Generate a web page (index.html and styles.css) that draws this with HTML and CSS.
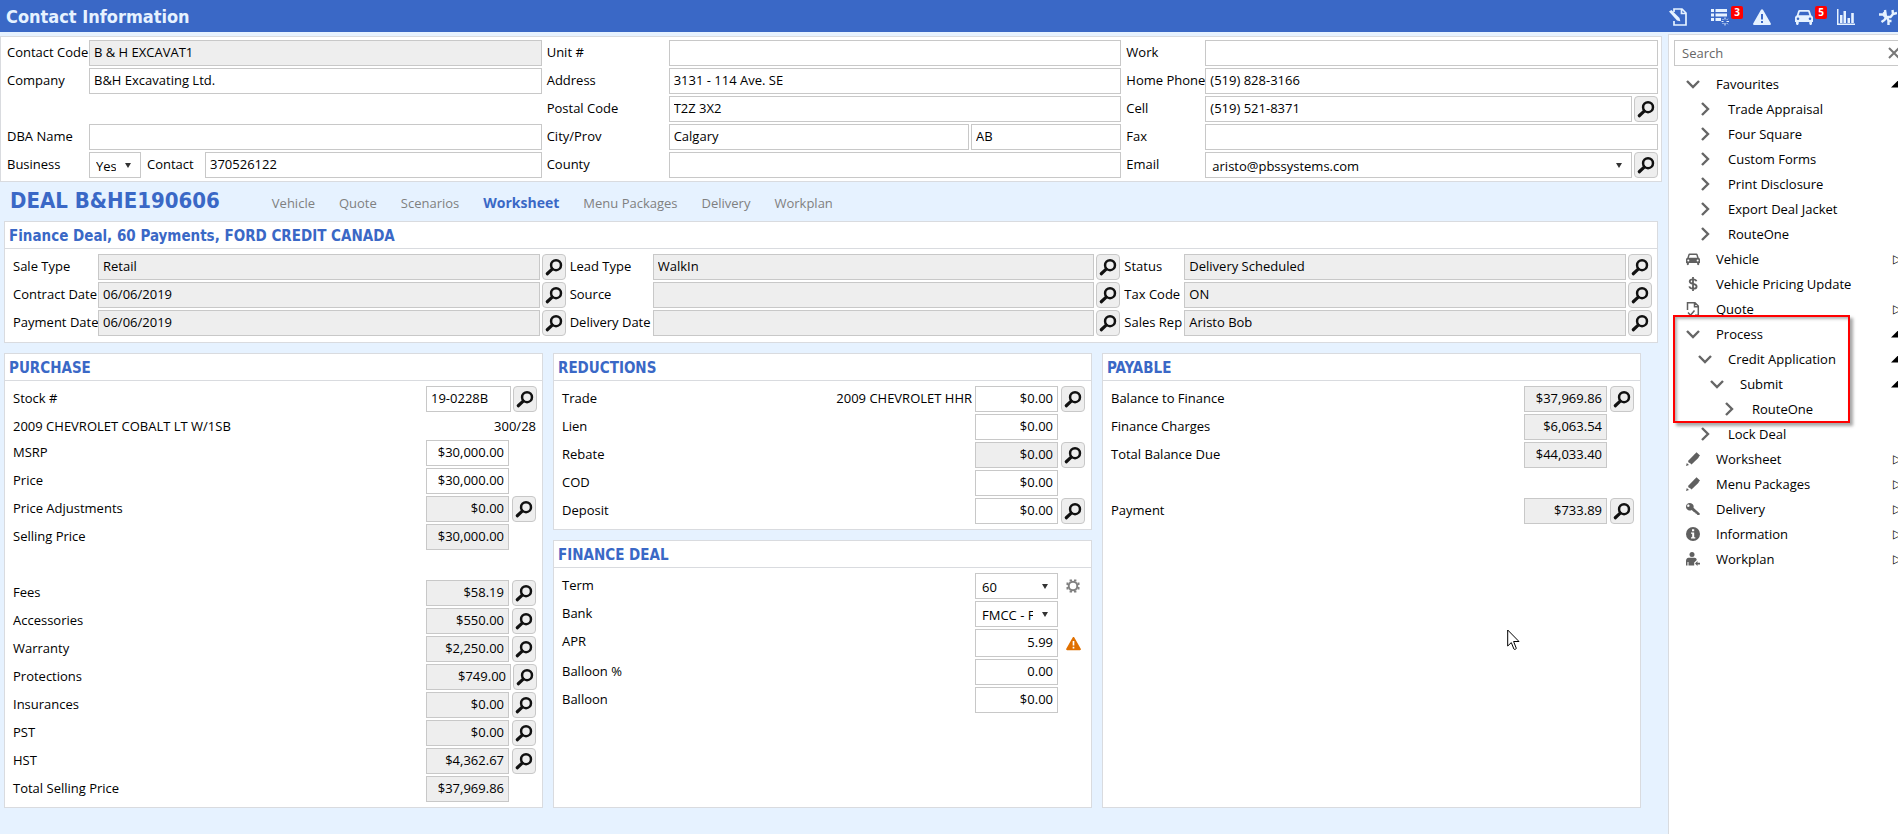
FILE: index.html
```html
<!DOCTYPE html>
<html lang="en">

<head>
    <meta charset="UTF-8">
    <meta name="viewport" content="width=device-width, initial-scale=1.0">
    <title>Contact Information</title>
    <link rel="stylesheet" href="styles.css">
</head>

<body>

    <!-- shared icons -->
    <svg class="sprite" aria-hidden="true">
        <symbol id="find" viewBox="0 0 16 16">
            <circle cx="9.8" cy="6.4" r="4.4" fill="none" stroke="#111" stroke-width="2.200" />
            <path d="M6.4 9.8L2 14" stroke="#111" stroke-width="2.8" stroke-linecap="round" />
        </symbol>
        <symbol id="car" viewBox="0 0 18 16">
            <path fill-rule="evenodd" d="M4.5 1h9c.7 0 1.200.4 1.400 1l1.400 4.500c1 .4 1.700 1.200 1.700 2.300V13h-1v1.500c0 .8-.5 1.500-1.300 1.500S14.300 15.300 14.300 14.500V13H3.700v1.500C3.700 15.300 3 16 2.300 16S1 15.300 1 14.500V13H0V8.800c0-1.100.7-1.900 1.700-2.300L3.100 2c.2-.6.7-1 1.400-1zM4.800 2.700L3.600 6.300h10.800l-1.200-3.600zM3 8.500a1.300 1.300 0 1 0 0 2.600 1.300 1.300 0 0 0 0-2.600zm12 0a1.300 1.300 0 1 0 0 2.600 1.300 1.300 0 0 0 0-2.600z" />
        </symbol>
        <symbol id="warn" viewBox="0 0 18 16">
            <path fill-rule="evenodd" d="M8 .8c.4-.8 1.600-.8 2 0l7.700 13.500c.5.8-.1 1.700-1 1.700H1.300c-.9 0-1.500-.9-1-1.700zM8 5v5.500h2V5zm0 7v2h2v-2z" />
        </symbol>
        <symbol id="right" viewBox="0 0 14 14">
            <path d="M4 1l6 6-6 6" fill="none" stroke="#666" stroke-width="2.400" />
        </symbol>
        <symbol id="down" viewBox="0 0 14 14">
            <path d="M1 4l6 6 6-6" fill="none" stroke="#666" stroke-width="2.400" />
        </symbol>
        <symbol id="pencil" viewBox="0 0 14 14">
            <path d="M2 10L9.200 2.300l1.500 1.500L4 11.200zM8.200 2.800L10.500.3 14 3.500l-2 2.200zM2 9l6.800-7 4 3.500L5.500 12.500zM0 14l.8-3L3 13z" />
        </symbol>
    </svg>

    <header class="topbar">
        <h1>Contact Information</h1>
        <nav class="tools">
            <button aria-label="Edit note">
                <svg width="18" height="18" viewBox="0 0 18 18"><path d="M5 4V1h8l4 4v12H5v-4M12.500 1v4.500H17" fill="none" stroke="#e6f2ff" stroke-width="1.700" /><path d="M0 3.500L2.500 2l8 8 .8 3.200-3.300-.8z" fill="#e6f2ff" /></svg>
            </button>
            <button aria-label="Tasks">
                <svg width="18" height="18" viewBox="0 0 18 18"><path d="M0 1h3v3H0zM4.500 1H16v3H4.500zM0 5.500h3v3H0zM4.500 5.500H16v3H4.500zM0 10h3v3H0zM4.500 10H10v3H4.500z" fill="#e6f2ff" /><path d="M14 9.500v2M14 15v2.500M10.500 13.500h2M15.500 13.500H18M11.500 11l1 1M16.800 10.800l-1 1M11.500 16l1-1M16.800 16.200l-1-1" stroke="#e6f2ff" /></svg>
                <span class="badge">3</span>
            </button>
            <button aria-label="Alerts"><svg width="18" height="16"><use href="#warn" /></svg></button>
            <button aria-label="Vehicles"><svg width="18" height="16"><use href="#car" /></svg><span class="badge">5</span></button>
            <button aria-label="Reports">
                <svg width="18" height="16" viewBox="0 0 18 16"><path d="M0 0h1.500v14.500H18V16H0zM3 6h2.500v8H3zM6.500 2H9v12H6.500zM10.500 9H13v5h-2.500zM14.200 4h2.600v10h-2.600z" /></svg>
            </button>
            <button aria-label="Workflow">
                <svg width="18" height="18" viewBox="0 0 18 18"><path d="M0 6.500h4l2.500 2.500h5L14 6l4-1M7 9L6 2M4.500 4L6 5.500M7.500 9l-2 3-3 2M8 9.500l1.500 3V17M9.500 13h3M14 6l-.5-4" fill="none" stroke="#e6f2ff" stroke-width="2.400" /></svg>
            </button>
        </nav>
    </header>

    <div class="page">
        <main class="main">

            <section class="panel contact">
                <div class="col">
                    <div class="field"><label for="code">Contact Code</label><input id="code" value="B &amp; H EXCAVAT1" readonly></div>
                    <div class="field"><label for="company">Company</label><input id="company" value="B&amp;H Excavating Ltd."></div>
                    <div class="field"></div>
                    <div class="field"><label for="dba">DBA Name</label><input id="dba"></div>
                    <div class="field">
                        <label for="business">Business</label>
                        <div class="select yes"><select id="business"><option>Yes</option><option>No</option></select></div>
                        <label class="inner" for="person">Contact</label><input id="person" value="370526122">
                    </div>
                </div>
                <div class="col">
                    <div class="field"><label for="unit">Unit #</label><input id="unit"></div>
                    <div class="field"><label for="address">Address</label><input id="address" value="3131 - 114 Ave. SE"></div>
                    <div class="field"><label for="postal">Postal Code</label><input id="postal" value="T2Z 3X2"></div>
                    <div class="field"><label for="city">City/Prov</label><div class="pair"><input id="city" value="Calgary"><input aria-label="Province" value="AB"></div></div>
                    <div class="field"><label for="county">County</label><input id="county"></div>
                </div>
                <div class="col">
                    <div class="field"><label for="work">Work</label><input id="work"></div>
                    <div class="field"><label for="home">Home Phone</label><input id="home" value="(519) 828-3166"></div>
                    <div class="field"><label for="cell">Cell</label><input id="cell" value="(519) 521-8371"><button class="find" aria-label="Find"><svg><use href="#find" /></svg></button></div>
                    <div class="field"><label for="fax">Fax</label><input id="fax"></div>
                    <div class="field"><label for="email">Email</label>
                        <div class="select"><select id="email"><option>aristo@pbssystems.com</option></select></div>
                        <button class="find" aria-label="Find"><svg><use href="#find" /></svg></button>
                    </div>
                </div>
            </section>

            <div class="dealbar">
                <h2>DEAL B&amp;HE190606</h2>
                <nav class="tabs">
                    <a href="#">Vehicle</a>
                    <a href="#">Quote</a>
                    <a href="#">Scenarios</a>
                    <a href="#" class="active">Worksheet</a>
                    <a href="#">Menu Packages</a>
                    <a href="#">Delivery</a>
                    <a href="#">Workplan</a>
                </nav>
            </div>

            <section class="panel deal">
                <h3>Finance Deal, 60 Payments, FORD CREDIT CANADA</h3>
                <div class="deal-body">
                    <div class="col">
                        <div class="field"><label for="saletype">Sale Type</label><input id="saletype" value="Retail" readonly><button class="find" aria-label="Find"><svg><use href="#find" /></svg></button></div>
                        <div class="field"><label for="contract">Contract Date</label><input id="contract" value="06/06/2019" readonly><button class="find" aria-label="Find"><svg><use href="#find" /></svg></button></div>
                        <div class="field"><label for="paydate">Payment Date</label><input id="paydate" value="06/06/2019" readonly><button class="find" aria-label="Find"><svg><use href="#find" /></svg></button></div>
                    </div>
                    <div class="col">
                        <div class="field"><label for="lead">Lead Type</label><input id="lead" value="WalkIn" readonly><button class="find" aria-label="Find"><svg><use href="#find" /></svg></button></div>
                        <div class="field"><label for="source">Source</label><input id="source" readonly><button class="find" aria-label="Find"><svg><use href="#find" /></svg></button></div>
                        <div class="field"><label for="deldate">Delivery Date</label><input id="deldate" readonly><button class="find" aria-label="Find"><svg><use href="#find" /></svg></button></div>
                    </div>
                    <div class="col">
                        <div class="field"><label for="status">Status</label><input id="status" value="Delivery Scheduled" readonly><button class="find" aria-label="Find"><svg><use href="#find" /></svg></button></div>
                        <div class="field"><label for="tax">Tax Code</label><input id="tax" value="ON" readonly><button class="find" aria-label="Find"><svg><use href="#find" /></svg></button></div>
                        <div class="field"><label for="rep">Sales Rep</label><input id="rep" value="Aristo Bob" readonly><button class="find" aria-label="Find"><svg><use href="#find" /></svg></button></div>
                    </div>
                </div>
            </section>

            <div class="sheets">
                <section class="panel">
                    <h3>PURCHASE</h3>
                    <div class="rows">
                        <div class="row wide"><label for="stock">Stock #</label><input id="stock" class="left" value="19-0228B"><button class="find" aria-label="Find"><svg><use href="#find" /></svg></button></div>
                        <div class="row info"><span class="grow">2009 CHEVROLET COBALT LT W/1SB</span><span>300/28</span></div>
                        <div class="row"><label for="msrp">MSRP</label><input id="msrp" value="$30,000.00"><span class="side"></span></div>
                        <div class="row"><label for="price">Price</label><input id="price" value="$30,000.00"><span class="side"></span></div>
                        <div class="row"><label for="adjust">Price Adjustments</label><input id="adjust" value="$0.00" readonly><button class="find" aria-label="Find"><svg><use href="#find" /></svg></button></div>
                        <div class="row"><label for="selling">Selling Price</label><input id="selling" value="$30,000.00" readonly><span class="side"></span></div>
                        <div class="row"></div>
                        <div class="row"><label for="fees">Fees</label><input id="fees" value="$58.19" readonly><button class="find" aria-label="Find"><svg><use href="#find" /></svg></button></div>
                        <div class="row"><label for="acc">Accessories</label><input id="acc" value="$550.00" readonly><button class="find" aria-label="Find"><svg><use href="#find" /></svg></button></div>
                        <div class="row"><label for="warranty">Warranty</label><input id="warranty" value="$2,250.00" readonly><button class="find" aria-label="Find"><svg><use href="#find" /></svg></button></div>
                        <div class="row wide"><label for="prot">Protections</label><input id="prot" value="$749.00" readonly><button class="find" aria-label="Find"><svg><use href="#find" /></svg></button></div>
                        <div class="row"><label for="ins">Insurances</label><input id="ins" value="$0.00" readonly><button class="find" aria-label="Find"><svg><use href="#find" /></svg></button></div>
                        <div class="row"><label for="pst">PST</label><input id="pst" value="$0.00" readonly><button class="find" aria-label="Find"><svg><use href="#find" /></svg></button></div>
                        <div class="row"><label for="hst">HST</label><input id="hst" value="$4,362.67" readonly><button class="find" aria-label="Find"><svg><use href="#find" /></svg></button></div>
                        <div class="row"><label for="total">Total Selling Price</label><input id="total" value="$37,969.86" readonly><span class="side"></span></div>
                    </div>
                </section>

                <div class="stack">
                    <section class="panel">
                        <h3>REDUCTIONS</h3>
                        <div class="rows">
                            <div class="row"><label for="trade">Trade</label><span>2009 CHEVROLET HHR</span><input id="trade" value="$0.00"><button class="find" aria-label="Find"><svg><use href="#find" /></svg></button></div>
                            <div class="row"><label for="lien">Lien</label><input id="lien" value="$0.00"><span class="side"></span></div>
                            <div class="row"><label for="rebate">Rebate</label><input id="rebate" value="$0.00" readonly><button class="find" aria-label="Find"><svg><use href="#find" /></svg></button></div>
                            <div class="row"><label for="cod">COD</label><input id="cod" value="$0.00"><span class="side"></span></div>
                            <div class="row"><label for="deposit">Deposit</label><input id="deposit" value="$0.00"><button class="find" aria-label="Find"><svg><use href="#find" /></svg></button></div>
                        </div>
                    </section>
                    <section class="panel fill">
                        <h3>FINANCE DEAL</h3>
                        <div class="rows">
                            <div class="row"><label for="term">Term</label>
                                <div class="select"><select id="term"><option>60</option></select></div>
                                <span class="side"><svg width="14" height="14" viewBox="0 0 14 14"><circle cx="7" cy="7" r="4.300" fill="none" stroke="#808080" stroke-width="2" /><path d="M4.800.5v2M9.200.5v2M4.800 11.500v2M9.200 11.500v2M.5 4.800h2M.5 9.200h2M11.500 4.800h2M11.500 9.200h2" stroke="#808080" stroke-width="2.400" /></svg></span>
                            </div>
                            <div class="row"><label for="bank">Bank</label>
                                <div class="select"><select id="bank"><option>FMCC - FORD CREDIT CANADA</option></select></div>
                                <span class="side"></span>
                            </div>
                            <div class="row tall"><label for="apr">APR</label><input id="apr" value="5.99"><span class="side alert"><svg width="15" height="15"><use href="#warn" /></svg></span></div>
                            <div class="row"><label for="balloonpct">Balloon %</label><input id="balloonpct" value="0.00"><span class="side"></span></div>
                            <div class="row"><label for="balloon">Balloon</label><input id="balloon" value="$0.00"><span class="side"></span></div>
                        </div>
                    </section>
                </div>

                <section class="panel">
                    <h3>PAYABLE</h3>
                    <div class="rows">
                        <div class="row"><label for="balance">Balance to Finance</label><input id="balance" value="$37,969.86" readonly><button class="find" aria-label="Find"><svg><use href="#find" /></svg></button></div>
                        <div class="row"><label for="charges">Finance Charges</label><input id="charges" value="$6,063.54" readonly><span class="side"></span></div>
                        <div class="row"><label for="due">Total Balance Due</label><input id="due" value="$44,033.40" readonly><span class="side"></span></div>
                        <div class="row"></div>
                        <div class="row"><label for="payment">Payment</label><input id="payment" value="$733.89" readonly><button class="find" aria-label="Find"><svg><use href="#find" /></svg></button></div>
                    </div>
                </section>
            </div>
        </main>

        <aside class="sidebar">
            <div class="sidebar-inner">
                <div class="search">
                    <input type="text" placeholder="Search" aria-label="Search">
                    <button aria-label="Clear"><svg width="12" height="12" viewBox="0 0 12 12"><path d="M1 1l10 10M11 1L1 11" stroke="#777" stroke-width="2" /></svg></button>
                </div>
                <ul class="tree">
                    <li class="open"><svg><use href="#down" /></svg><a href="#">Favourites</a></li>
                    <li class="l2"><svg><use href="#right" /></svg><a href="#">Trade Appraisal</a></li>
                    <li class="l2"><svg><use href="#right" /></svg><a href="#">Four Square</a></li>
                    <li class="l2"><svg><use href="#right" /></svg><a href="#">Custom Forms</a></li>
                    <li class="l2"><svg><use href="#right" /></svg><a href="#">Print Disclosure</a></li>
                    <li class="l2"><svg><use href="#right" /></svg><a href="#">Export Deal Jacket</a></li>
                    <li class="l2"><svg><use href="#right" /></svg><a href="#">RouteOne</a></li>
                    <li class="closed"><svg><use href="#car" /></svg><a href="#">Vehicle</a></li>
                    <li><svg viewBox="0 0 14 14"><path d="M10.500 4.300C10 2.800 8.800 2.400 7 2.400c-2 0-3.300.8-3.300 2.200C3.700 7.800 10.600 6 10.600 9.400c0 1.500-1.500 2.300-3.500 2.300-2 0-3.400-.7-3.800-2.300M7 0v14" fill="none" stroke="#606060" stroke-width="1.800" /></svg><a href="#">Vehicle Pricing Update</a></li>
                    <li class="closed"><svg viewBox="0 0 14 14"><path d="M1.500 8V.8H9L12.300 4v9.200H9M8.500.8v4h3.800M2 10.500l2.500 2.700L8.500 8.500" fill="none" stroke="#606060" stroke-width="1.500" /></svg><a href="#">Quote</a></li>
                    <li class="open"><svg><use href="#down" /></svg><a href="#">Process</a><span class="highlight"></span></li>
                    <li class="open l2"><svg><use href="#down" /></svg><a href="#">Credit Application</a></li>
                    <li class="open l3"><svg><use href="#down" /></svg><a href="#">Submit</a></li>
                    <li class="l4"><svg><use href="#right" /></svg><a href="#">RouteOne</a></li>
                    <li class="l2"><svg><use href="#right" /></svg><a href="#">Lock Deal</a></li>
                    <li class="closed"><svg><use href="#pencil" /></svg><a href="#">Worksheet</a></li>
                    <li class="closed"><svg><use href="#pencil" /></svg><a href="#">Menu Packages</a></li>
                    <li class="closed"><svg viewBox="0 0 14 14"><path fill-rule="evenodd" d="M4 1a3.700 3.700 0 0 1 3.500 4.800l6.300 5.700-.3 1.500h-2l-1-1.200-1-.2-.3-1.200-1.100-.1-2.400-2.200A3.800 3.800 0 1 1 4 1zM2.700 2.500a1.200 1.200 0 1 0 0 2.300 1.200 1.200 0 0 0 0-2.300z" /></svg><a href="#">Delivery</a></li>
                    <li class="closed"><svg viewBox="0 0 14 14"><circle cx="7" cy="7" r="7" /><path d="M6 2.300h2.200v2H6zM5 5.500h3.200v4.800H9.300v1.300H5v-1.300h1.200V6.800H5z" fill="#fff" /></svg><a href="#">Information</a></li>
                    <li class="closed"><svg viewBox="0 0 14 14"><circle cx="6" cy="2.500" r="2.500" /><path d="M0 13.500V9c0-2 1-3.300 2.500-3.300h6C9.800 5.700 10.500 6.500 10.800 8L8.200 10.500v3H2.500V10H1.500v3.500z" /><path d="M9 11.500L11.500 9v1.700H14v1.700h-2.500V14z" /></svg><a href="#">Workplan</a></li>
                </ul>
            </div>
        </aside>
    </div>

    <svg class="pointer" width="13" height="22" viewBox="0 0 13 22" aria-hidden="true"><path d="M.7 1v16l3.600-3.400 2.600 6.400c.4 1 2.700.2 2.300-1L6.600 12.500H12z" fill="#fff" stroke="#000" /></svg>

</body>

</html>
```
FILE: styles.css
```css
* {
    box-sizing: border-box;
}

body {
    margin: 0;
    min-height: 100vh;
    display: flex;
    flex-direction: column;
    overflow: hidden;
    background: #e6f2ff;
    color: #000;
    font-family: "Open Sans", "Segoe UI", sans-serif;
    font-size: 13px;
    line-height: 18px;
}

h1,
h2,
h3 {
    margin: 0;
    font-family: "DejaVu Sans Condensed", Tahoma, sans-serif;
    font-weight: bold;
    color: #3a68c6;
}

a {
    color: inherit;
    text-decoration: none;
}

button,
input,
select {
    font: inherit;
    color: inherit;
}

button {
    display: flex;
    align-items: center;
    justify-content: center;
    padding: 0;
    cursor: pointer;
}

.sprite {
    display: none;
}

/* top bar */
.topbar {
    display: flex;
    justify-content: space-between;
    height: 32px;
    padding-left: 6px;
    overflow: hidden;
    background: #3a68c6;
}

.topbar h1 {
    font-size: 18px;
    line-height: 33px;
    color: #e6f2ff;
}

.tools {
    display: flex;
    margin-right: -11px;
    padding-top: 2px;
}

.tools button {
    position: relative;
    width: 42px;
    border: none;
    background: none;
    fill: #e6f2ff;
}

.badge {
    position: absolute;
    left: 32px;
    top: 4px;
    width: 12px;
    border-radius: 2px;
    background: #f00;
    color: #fff;
    font-size: 10px;
    font-weight: bold;
    line-height: 13px;
}

/* layout */
.page {
    flex: 1;
    display: flex;
}

.main {
    flex: 1;
    min-width: 0;
    padding-top: 4px;
}

.panel {
    border: 1px solid #d9dbdf;
    background: #fff;
}

.panel h3 {
    height: 27px;
    padding-left: 4px;
    border-bottom: 1px solid #d9dbdf;
    font-size: 15px;
    line-height: 28px;
}

/* fields */
.col {
    display: flex;
    flex-direction: column;
    gap: 2px;
}

.field {
    display: flex;
    gap: 2px;
    height: 26px;
}

label {
    line-height: 24px;
    white-space: nowrap;
}

.field > label {
    flex: none;
    margin-right: -2px;
}

input,
select {
    flex: 1;
    min-width: 0;
    width: 100%;
    height: 100%;
    padding: 0 4px 2px;
    border: 1px solid #c8c8c8;
    border-radius: 0;
    background: #fff;
    outline: none;
}

input:read-only {
    background: #eee;
}

.select {
    position: relative;
    flex: 1;
}

.select select {
    appearance: none;
    display: block;
    padding: 2px 24px 0 6px;
    line-height: 18px;
}

.select::after {
    content: "";
    position: absolute;
    right: 10px;
    top: 11px;
    border: 3px solid transparent;
    border-top: 5px solid #333;
    border-bottom: none;
    pointer-events: none;
}

.find {
    flex: none;
    width: 24px;
    height: 26px;
    border: 1px solid #c8c8c8;
    border-radius: 4px;
    background: #eee;
}

.find svg {
    width: 18px;
    height: 18px;
}

/* contact panel */
.contact {
    display: grid;
    grid-template-columns: calc((100% - 293px) / 3 + 82px) calc((100% - 293px) / 3 + 127px) calc((100% - 293px) / 3 + 84px);
    margin-right: 6px;
    padding: 3px 3px 3px 6px;
}

.contact .field > label {
    width: 82px;
}

.contact .col + .col .field > label {
    width: 127px;
    padding-left: 5px;
}

.contact .col:last-child .field > label {
    width: 84px;
}

.contact .yes {
    flex: 0 0 52px;
}

.contact .field > .inner {
    width: 62px;
    padding-left: 4px;
}

.pair {
    flex: 1;
    display: grid;
    grid-template-columns: 2fr 1fr;
    gap: 2px;
}

/* deal title and tabs */
.dealbar {
    display: flex;
    align-items: baseline;
    height: 39px;
    padding-left: 10px;
}

.dealbar h2 {
    margin-right: 52px;
    font-size: 22px;
    line-height: 37px;
}

.tabs {
    display: flex;
    gap: 24px;
    color: #808080;
}

.tabs .active {
    color: #3a68c6;
    font-size: 14px;
    font-weight: bold;
}

.deal {
    margin: 0 10px 10px 4px;
}

.deal-body {
    display: grid;
    grid-template-columns: calc((100% - 236px) / 3 + 85px) calc((100% - 236px) / 3 + 87px) calc((100% - 236px) / 3 + 64px);
    padding: 5px 5px 6px 8px;
}

.deal .field > label {
    width: 85px;
}

.deal .col + .col .field > label {
    width: 87px;
    padding-left: 4px;
}

.deal .col:last-child .field > label {
    width: 64px;
}

/* worksheet panels */
.sheets {
    display: grid;
    grid-template-columns: repeat(3, minmax(0, 1fr));
    gap: 10px;
    margin: 0 27px 0 4px;
}

.stack {
    display: flex;
    flex-direction: column;
    gap: 10px;
}

.fill {
    flex: 1;
}

.rows {
    display: flex;
    flex-direction: column;
    gap: 2px;
    padding: 5px 6px 5px 8px;
}

.row {
    display: flex;
    gap: 3px;
    height: 26px;
    line-height: 24px;
}

.row label,
.row .grow {
    flex: 1;
}

.row input,
.row .select {
    flex: 0 0 83px;
}

.row input {
    text-align: right;
}

.row input.left {
    text-align: left;
}

.row.wide {
    gap: 2px;
    margin-right: -1px;
}

.row.wide input {
    flex-basis: 85px;
}

.row.info {
    height: 24px;
}

.row.tall {
    height: 28px;
}

.side {
    display: flex;
    flex: 0 0 24px;
    align-items: center;
    justify-content: center;
}

.alert {
    fill: #e07000;
}

/* sidebar */
.sidebar {
    flex: 0 0 230px;
    margin-top: 2px;
    overflow: hidden;
    border: 1px solid #d9dbdf;
    border-width: 1px 0 0 1px;
    background: #fff;
}

.sidebar-inner {
    width: 244px;
    padding: 5px;
}

.search {
    display: flex;
    height: 26px;
    border: 1px solid #c8c8c8;
}

.search input {
    padding: 0 7px;
    border: none;
}

.search input::placeholder {
    color: #666;
}

.search button {
    width: 26px;
    border: none;
    background: none;
}

.tree {
    margin: 5px 0 0;
    padding: 0;
    list-style: none;
}

.tree li {
    position: relative;
    display: flex;
    align-items: center;
    gap: 16px;
    height: 25px;
    padding-left: 12px;
    fill: #606060;
}

.tree li > svg {
    width: 14px;
    height: 14px;
}

.tree .l2 {
    padding-left: 24px;
}

.tree .l3 {
    padding-left: 36px;
}

.tree .l4 {
    padding-left: 48px;
}

.tree .open::after,
.tree .closed::after {
    content: "";
    width: 8px;
    height: 8px;
    margin-left: auto;
    margin-right: 9px;
    background: #000;
    clip-path: polygon(100% 0, 100% 100%, 0 100%);
}

.tree .closed::after {
    content: "▷";
    width: 10px;
    height: auto;
    margin-right: 5px;
    background: none;
    clip-path: none;
    font-family: "DejaVu Sans", sans-serif;
    font-size: 12px;
    font-weight: bold;
}

/* red frame round the Process branch */
.highlight {
    position: absolute;
    left: -1px;
    top: -6px;
    width: 177px;
    height: 108px;
    border: 2px solid #f00;
    box-shadow: 3px 3px 3px rgba(0, 0, 0, 0.35), inset 2px 2px 3px rgba(0, 0, 0, 0.3);
    pointer-events: none;
}

/* mouse pointer */
.pointer {
    position: absolute;
    left: 1507px;
    top: 629px;
}
```
